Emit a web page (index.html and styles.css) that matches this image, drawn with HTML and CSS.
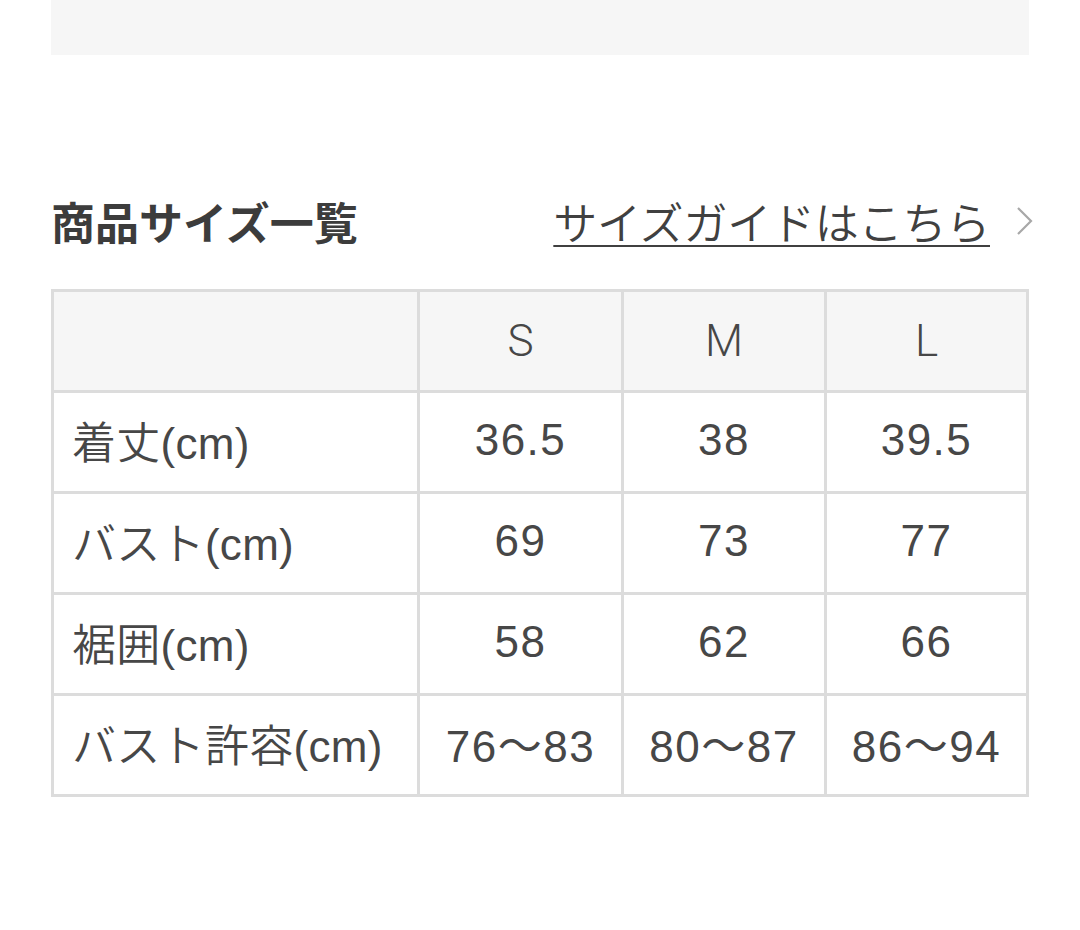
FILE: index.html
```html
<!DOCTYPE html>
<html lang="ja">
<head>
<meta charset="utf-8">
<title>商品サイズ一覧</title>
<link rel="stylesheet" href="styles.css">
</head>
<body>
<div class="page">
  <div class="top-box"></div>
  <div class="section-head">
    <h2 class="title">商品サイズ一覧</h2>
    <a class="guide" href="#"><span class="guide-text">サイズガイドはこちら</span><svg class="chev" width="18" height="30" viewBox="0 0 18 30"><polyline points="2,2 15,15 2,28" fill="none" stroke="#a8a8a8" stroke-width="2.2"/></svg></a>
  </div>
  <div class="size-table">
    <div class="cell head"></div>
    <div class="cell head num">S</div>
    <div class="cell head num">M</div>
    <div class="cell head num">L</div>

    <div class="cell label">着丈(cm)</div>
    <div class="cell num">36.5</div>
    <div class="cell num">38</div>
    <div class="cell num">39.5</div>

    <div class="cell label">バスト(cm)</div>
    <div class="cell num">69</div>
    <div class="cell num">73</div>
    <div class="cell num">77</div>

    <div class="cell label">裾囲(cm)</div>
    <div class="cell num">58</div>
    <div class="cell num">62</div>
    <div class="cell num">66</div>

    <div class="cell label">バスト許容(cm)</div>
    <div class="cell num">76～83</div>
    <div class="cell num">80～87</div>
    <div class="cell num">86～94</div>
  </div>
</div>
</body>
</html>
```

FILE: styles.css
```css
html, body {
  margin: 0;
  padding: 0;
  background: #ffffff;
}
body {
  font-family: "Noto Sans CJK JP", "Noto Sans", sans-serif;
  color: #3a3a3a;
}
.page {
  width: 978px;
  margin-left: 51px;
}
.top-box {
  height: 55px;
  background: #f6f6f6;
}
.section-head {
  display: flex;
  justify-content: space-between;
  align-items: center;
  margin-top: 139px;
  height: 54px;
}
.title {
  margin: 0;
  font-size: 44px;
  font-weight: 700;
  line-height: 54px;
  color: #3c3c3c;
}
.guide {
  display: flex;
  align-items: center;
  text-decoration: none;
  color: #404040;
  margin-right: -5px;
}
.guide-text {
  font-size: 44px;
  font-weight: 350;
  line-height: 54px;
  letter-spacing: -0.2px;
  text-decoration: underline;
  text-decoration-thickness: 2px;
  text-underline-offset: 5px;
}
.chev {
  margin-left: 26px;
  display: block;
}
.size-table {
  margin-top: 41px;
  display: grid;
  grid-template-columns: 363px 201px 200px 199px;
  grid-auto-rows: 98px;
  gap: 3px;
  padding: 3px;
  background: #dcdcdc;
}
.cell {
  background: #ffffff;
  display: flex;
  align-items: center;
  font-family: "Liberation Sans", "Noto Sans CJK JP", sans-serif;
  font-size: 44px;
  font-weight: 400;
  letter-spacing: 1.5px;
  color: #474747;
  padding-bottom: 4px;
  box-sizing: border-box;
}
.cell.head {
  background: #f6f6f6;
  font-family: "Roboto", "Liberation Sans", sans-serif;
  font-weight: 300;
  letter-spacing: 0;
  padding-bottom: 0;
}
.num {
  justify-content: center;
}
.label {
  padding-left: 18px;
  font-weight: 350;
  letter-spacing: 0.3px;
}
```
